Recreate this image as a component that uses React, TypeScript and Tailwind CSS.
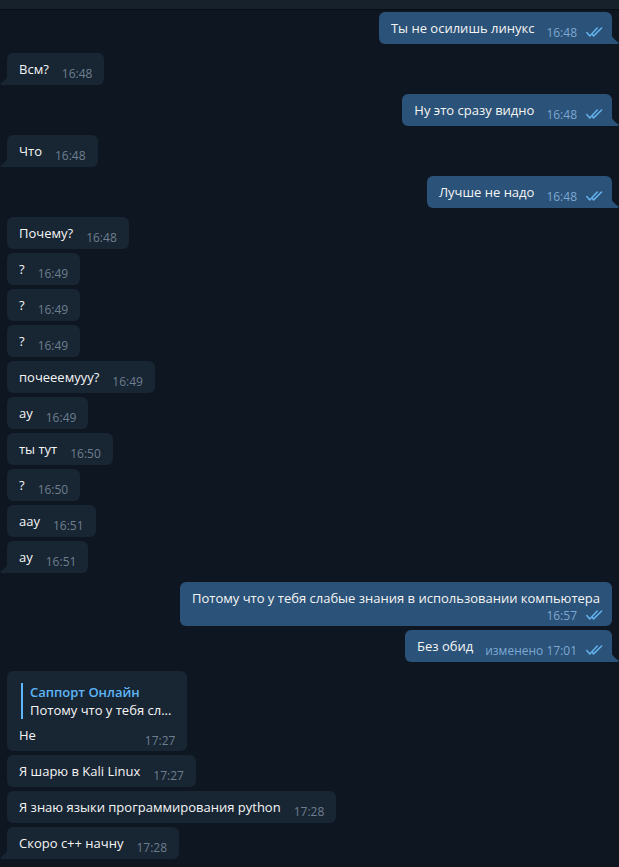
type Msg = {
  out?: boolean;
  text: string;
  time: string;
  gap: 'first' | 'group' | 'same';
  tail?: boolean;
  wrap?: boolean;
  reply?: { name: string; text: string };
};

const messages: Msg[] = [
  { out: true, text: 'Ты не осилишь линукс', time: '16:48', gap: 'first', tail: true },
  { text: 'Всм?', time: '16:48', gap: 'group', tail: true },
  { out: true, text: 'Ну это сразу видно', time: '16:48', gap: 'group', tail: true },
  { text: 'Что', time: '16:48', gap: 'group', tail: true },
  { out: true, text: 'Лучше не надо', time: '16:48', gap: 'group', tail: true },
  { text: 'Почему?', time: '16:48', gap: 'group' },
  { text: '?', time: '16:49', gap: 'same' },
  { text: '?', time: '16:49', gap: 'same' },
  { text: '?', time: '16:49', gap: 'same' },
  { text: 'почееемууу?', time: '16:49', gap: 'same' },
  { text: 'ау', time: '16:49', gap: 'same' },
  { text: 'ты тут', time: '16:50', gap: 'same' },
  { text: '?', time: '16:50', gap: 'same' },
  { text: 'аау', time: '16:51', gap: 'same' },
  { text: 'ау', time: '16:51', gap: 'same', tail: true },
  {
    out: true,
    text: 'Потому что у тебя слабые знания в использовании компьютера',
    time: '16:57',
    gap: 'group',
    wrap: true,
  },
  { out: true, text: 'Без обид', time: 'изменено 17:01', gap: 'same', tail: true },
  {
    text: 'Не',
    time: '17:27',
    gap: 'group',
    reply: { name: 'Саппорт Онлайн', text: 'Потому что у тебя сл...' },
  },
  { text: 'Я шарю в Kali Linux', time: '17:27', gap: 'same' },
  { text: 'Я знаю языки программирования python', time: '17:28', gap: 'same' },
  { text: 'Скоро с++ начну', time: '17:28', gap: 'same', tail: true },
];

function Checks() {
  return (
    <svg width="17" height="10" viewBox="0 0 17 10" fill="none" className="ml-[9px] mb-[2px] shrink-0">
      <path d="M0.8 5.6 L3.8 8.9 L11.2 1" stroke="#64b3ee" strokeWidth="1.5" strokeLinecap="round" strokeLinejoin="round" />
      <path d="M6.4 7.6 L7.6 8.9 L15.6 1" stroke="#64b3ee" strokeWidth="1.5" strokeLinecap="round" strokeLinejoin="round" />
    </svg>
  );
}

function Tail({ out }: { out?: boolean }) {
  if (out) {
    return (
      <svg width="8" height="10" viewBox="0 0 8 10" className="absolute right-[-7px] bottom-0">
        <path d="M0 0 L0 10 L6.5 10 C7.5 10 8 9 7.2 8.3 C4 6 1 3.5 0 0 Z" fill="#2b5278" />
      </svg>
    );
  }
  return (
    <svg width="8" height="10" viewBox="0 0 8 10" className="absolute left-[-7px] bottom-0">
      <path d="M8 0 L8 10 L1.5 10 C0.5 10 0 9 0.8 8.3 C4 6 7 3.5 8 0 Z" fill="#182533" />
    </svg>
  );
}

function Time({ m }: { m: Msg }) {
  return (
    <span className="flex items-end shrink-0">
      <span
        className={
          'text-[12px] leading-[12px] whitespace-nowrap ' + (m.out ? 'text-[#7da8d3]' : 'text-[#6d7f8f]')
        }
      >
        {m.time}
      </span>
      {m.out && <Checks />}
    </span>
  );
}

function Bubble({ m }: { m: Msg }) {
  const color = m.out ? 'bg-[#2b5278] pl-[12px] pr-[9px]' : 'bg-[#182533] pl-[12px] pr-[12px]';
  const corner = m.tail ? (m.out ? 'rounded-br-none' : 'rounded-bl-none') : '';
  const timeGap = m.out ? 'ml-[12px]' : 'ml-[13px]';

  if (m.reply) {
    return (
      <div className={'relative rounded-[6px] pt-[12px] pb-[7px] flex flex-col ' + color + ' ' + corner}>
        <div className="ml-[2px] border-l-2 border-[#5eb5f7] pl-[7px] pr-[4px]">
          <div className="leading-[18px] font-semibold text-[#5eb5f7]">{m.reply.name}</div>
          <div className="leading-[18px] text-[#f5f5f5] whitespace-nowrap">{m.reply.text}</div>
        </div>
        <div className="mt-[7px] flex items-end justify-between">
          <span className="leading-[18px] text-[#f5f5f5]">{m.text}</span>
          <span className={'mb-[-3px] ' + timeGap}>
            <Time m={m} />
          </span>
        </div>
        {m.tail && <Tail out={m.out} />}
      </div>
    );
  }

  if (m.wrap) {
    return (
      <div className={'relative rounded-[6px] pt-[7px] pb-[3px] ' + color + ' ' + corner}>
        <div className="leading-[18px] text-[#f5f5f5] pr-[3px]">{m.text}</div>
        <div className="flex justify-end pt-[1px] h-[16px] items-center">
          <Time m={m} />
        </div>
        {m.tail && <Tail out={m.out} />}
      </div>
    );
  }

  return (
    <div className={'relative rounded-[6px] py-[7px] flex items-end ' + color + ' ' + corner}>
      <span className="leading-[18px] text-[#f5f5f5] whitespace-nowrap">{m.text}</span>
      <span className={'mb-[-2px] ' + timeGap}>
        <Time m={m} />
      </span>
      {m.tail && <Tail out={m.out} />}
    </div>
  );
}

export default function App() {
  return (
    <div className="min-h-screen w-full bg-[#0e1621] font-['Open_Sans','DejaVu_Sans',sans-serif] text-[13px]">
      <div className="h-[10px] bg-[#17212b] border-b border-[#0a0f15]" />

      <div className="flex flex-col px-[7px] pb-[7px]">
        {messages.map((m, i) => (
          <div
            key={i}
            className={
              'flex ' +
              (m.out ? 'justify-end ' : 'justify-start ') +
              (m.gap === 'first' ? 'mt-[2px]' : m.gap === 'group' ? 'mt-[9px]' : 'mt-1')
            }
          >
            <Bubble m={m} />
          </div>
        ))}
      </div>
    </div>
  );
}
